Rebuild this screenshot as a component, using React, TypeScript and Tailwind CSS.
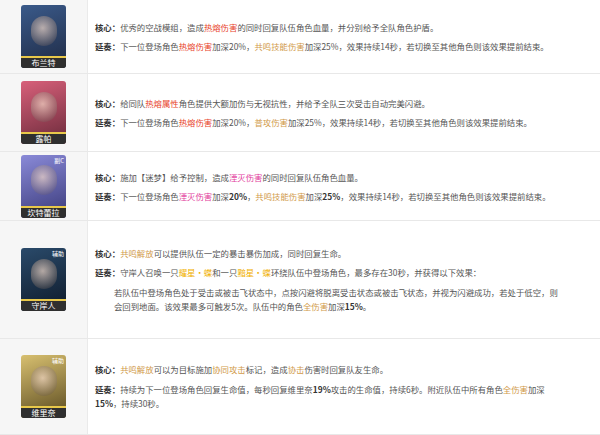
import React from "react";

const R = ({ c }: { c: string }) => <span className="text-[#e8442c]">{c}</span>;
const G = ({ c }: { c: string }) => <span className="text-[#d19a4a]">{c}</span>;
const P = ({ c }: { c: string }) => <span className="text-[#e23c9c]">{c}</span>;
const Y = ({ c }: { c: string }) => <span className="text-[#f0b000]">{c}</span>;
const B = ({ c }: { c: string }) => <b className="font-bold text-[#333]">{c}</b>;

function Avatar({ name, from, to, tag }: { name: string; from: string; to: string; tag?: string }) {
  return (
    <div className="relative w-[45px] h-[63px] rounded-[3px] overflow-hidden flex flex-col" style={{ background: `linear-gradient(160deg, ${from}, ${to})` }}>
      {tag && <span className="absolute top-[1px] right-[2px] text-[6px] text-white">{tag}</span>}
      <div className="flex-1 flex items-center justify-center">
        <div className="w-[26px] h-[30px] rounded-full opacity-70" style={{ background: `radial-gradient(circle at 45% 40%, #f3d9c8, ${to})` }} />
      </div>
      <div className="h-[12px] bg-[#2f2f2f] border-t-2 border-[#e8c84a] text-white text-[8px] leading-[10px] text-center">{name}</div>
    </div>
  );
}

function Row({ h, av, children }: { h: number; av: React.ReactNode; children: React.ReactNode }) {
  return (
    <div className="flex border-b border-[#e8e8e8]" style={{ height: h }}>
      <div className="w-[88px] shrink-0 bg-[#f6f6f6] border-r border-[#eaeaea] flex items-center justify-center">{av}</div>
      <div className="flex-1 min-w-0 pl-[7px] flex flex-col justify-center gap-[7px]">{children}</div>
    </div>
  );
}

const L = ({ children }: { children: React.ReactNode }) => <div className="leading-[12px] whitespace-nowrap">{children}</div>;

export default function App() {
  return (
    <div className="w-[600px] h-[435px] overflow-hidden bg-white text-[8.4px] text-[#555]" style={{ fontFamily: '"Noto Sans CJK SC", "Noto Sans", sans-serif' }}>
      <Row h={74} av={<Avatar name="布兰特" from="#3a5a8a" to="#1f2a44" />}>
        <L><B c="核心：" />优秀的空战模组，造成<R c="热熔伤害" />的同时回复队伍角色血量，并分别给予全队角色护盾。</L>
        <L><B c="延奏：" />下一位登场角色<R c="热熔伤害" />加深20%，<G c="共鸣技能伤害" />加深25%，效果持续14秒，若切换至其他角色则该效果提前结束。</L>
      </Row>
      <Row h={78} av={<Avatar name="露帕" from="#d8607a" to="#6a2a3a" />}>
        <L><B c="核心：" />给同队<R c="热熔属性" />角色提供大额加伤与无视抗性，并给予全队三次受击自动完美闪避。</L>
        <L><B c="延奏：" />下一位登场角色<R c="热熔伤害" />加深20%，<G c="普攻伤害" />加深25%，效果持续14秒，若切换至其他角色则该效果提前结束。</L>
      </Row>
      <Row h={69} av={<Avatar name="坎特蕾拉" from="#8a8ad8" to="#3a3a7a" tag="副C" />}>
        <L><B c="核心：" />施加【迷梦】给予控制，造成<P c="湮灭伤害" />的同时回复队伍角色血量。</L>
        <L><B c="延奏：" />下一位登场角色<P c="湮灭伤害" />加深<B c="20%" />，<G c="共鸣技能伤害" />加深<B c="25%" />，效果持续14秒，若切换至其他角色则该效果提前结束。</L>
      </Row>
      <Row h={118} av={<Avatar name="守岸人" from="#2a4a6a" to="#0e1a2a" tag="辅助" />}>
        <L><B c="核心：" /><G c="共鸣解放" />可以提供队伍一定的暴击暴伤加成，同时回复生命。</L>
        <L><B c="延奏：" />守岸人召唤一只<Y c="耀星·蝶" />和一只<Y c="黯星·蝶" />环绕队伍中登场角色，最多存在30秒，并获得以下效果：</L>
        <div className="pl-[19px] w-[560px] leading-[14px] whitespace-nowrap">
          <div>若队伍中登场角色处于受击或被击飞状态中，点按闪避将脱离受击状态或被击飞状态，并视为闪避成功，若处于低空，则</div>
          <div>会回到地面。该效果最多可触发5次。队伍中的角色<G c="全伤害" />加深<B c="15%" />。</div>
        </div>
      </Row>
      <Row h={96} av={<Avatar name="维里奈" from="#d8c070" to="#5a4a20" tag="辅助" />}>
        <L><B c="核心：" /><G c="共鸣解放" />可以为目标施加<G c="协同攻击" />标记，造成<G c="协击" />伤害时回复队友生命。</L>
        <div className="leading-[14px] whitespace-nowrap">
          <div><B c="延奏：" />持续为下一位登场角色回复生命值，每秒回复维里奈<B c="19%" />攻击的生命值，持续6秒。附近队伍中所有角色<G c="全伤害" />加深</div>
          <div><B c="15%" />，持续30秒。</div>
        </div>
      </Row>
    </div>
  );
}
